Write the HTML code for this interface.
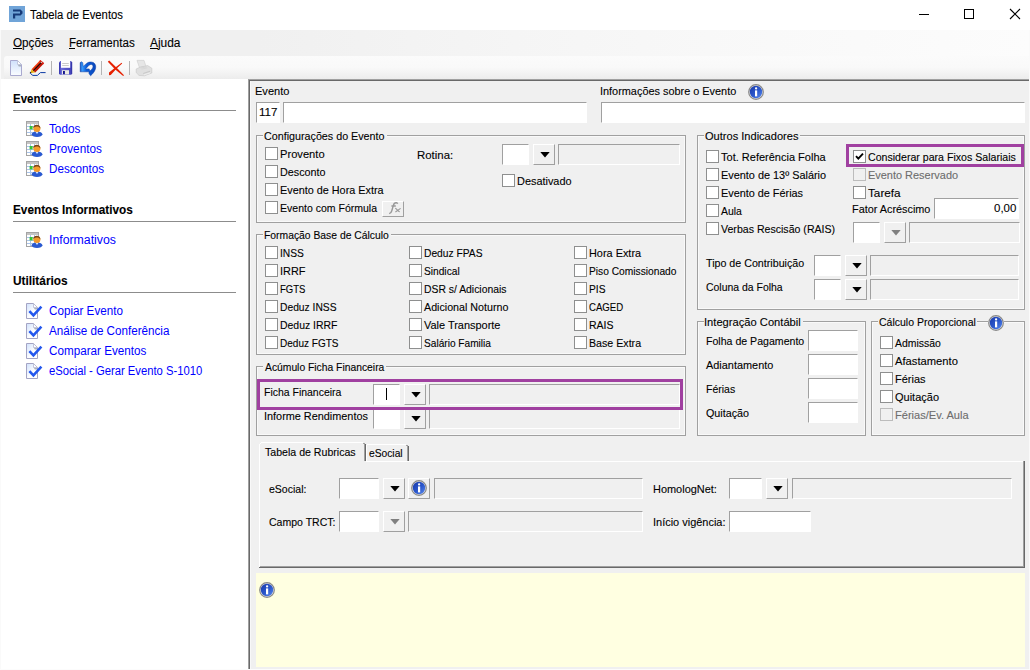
<!DOCTYPE html>
<html><head><meta charset="utf-8"><title>Tabela de Eventos</title>
<style>
html,body{margin:0;padding:0;}
body{width:1030px;height:670px;position:relative;overflow:hidden;background:#f0f0f0;font-family:"Liberation Sans", sans-serif;font-size:11px;}
body div, body span, body svg{position:absolute;display:block;box-sizing:border-box;white-space:nowrap;}
body span{-webkit-text-stroke:0.1px currentColor;}body span.ns{-webkit-text-stroke:0;}
</style></head><body>
<div style="left:0px;top:0px;width:1030px;height:30px;background:#fff;"></div>
<svg style="left:9px;top:6px" width="16" height="16" viewBox="0 0 16 16"><rect width="16" height="16" fill="#70a4d8"/><path d="M4 3.5H11.5L13.5 5.5V7.5L11.5 9.5H6.2V12.5H4V7.4H11V5.6H4Z" fill="#163a78"/></svg>
<span style="left:29.94px;top:7.34px;font-size:12px;font-weight:normal;color:#000;transform:scaleX(0.9415);transform-origin:0 0;line-height:16px;">Tabela de Eventos</span>
<svg style="left:915px;top:5px" width="110" height="20" viewBox="0 0 110 20"><path d="M4 9.5H14" stroke="#000" stroke-width="1"/><rect x="49.5" y="4.5" width="9" height="9" fill="none" stroke="#000" stroke-width="1"/><path d="M95 4L105 14M105 4L95 14" stroke="#000" stroke-width="1.1"/></svg>
<div style="left:0px;top:30px;width:1030px;height:26px;background:linear-gradient(90deg,#f0f0f0 0,#f0f0f0 25%,#f5f5f5 50%,#f9f9f9 75%,#fcfcfc 100%);"></div>
<span style="left:13.15px;top:35.34px;font-size:12px;font-weight:normal;color:#000;transform:scaleX(0.9741);transform-origin:0 0;line-height:16px;">Opções</span>
<span style="left:68.73px;top:35.34px;font-size:12px;font-weight:normal;color:#000;transform:scaleX(0.9656);transform-origin:0 0;line-height:16px;">Ferramentas</span>
<span style="left:149.97px;top:35.34px;font-size:12px;font-weight:normal;color:#000;transform:scaleX(0.9939);transform-origin:0 0;line-height:16px;">Ajuda</span>
<div style="left:13px;top:48px;width:9px;height:1px;background:#000;"></div>
<div style="left:69px;top:48px;width:6px;height:1px;background:#000;"></div>
<div style="left:150px;top:48px;width:8px;height:1px;background:#000;"></div>
<div style="left:0px;top:56px;width:4px;height:23px;background:#f0f0f0;"></div>
<div style="left:4px;top:56px;width:1026px;height:23px;background:linear-gradient(#fbfbfb,#f9f9f9 50%,#ececec);border-top-left-radius:3px;"></div>
<div style="left:51px;top:61px;width:1px;height:14px;background:#b4b4b4;"></div>
<div style="left:101px;top:61px;width:1px;height:14px;background:#b4b4b4;"></div>
<div style="left:129px;top:61px;width:1px;height:14px;background:#b4b4b4;"></div>
<svg style="left:9px;top:59px" width="14" height="18" viewBox="0 0 14 18"><defs><linearGradient id="nd" x1="0" y1="0" x2="0" y2="1"><stop offset="0" stop-color="#cfe0fb"/><stop offset="1" stop-color="#fbfdff"/></linearGradient></defs><path d="M1.5 1.5H8.5L12.5 5.5V16.5H1.5Z" fill="url(#nd)" stroke="#a9a9cf" stroke-width="1"/><path d="M8.5 1.5V5.5H12.5Z" fill="#fff" stroke="#b8bcd6" stroke-width="0.8"/><path d="M9 6H12V7.5H9.8Z" fill="#a8b0bc"/></svg>
<svg style="left:26px;top:58px" width="24" height="20" viewBox="0 0 24 20"><path d="M5.6 11.3L14.3 2.1L16.3 3.7L7.4 12.9Z" fill="#f0380c"/><path d="M7.4 12.9L16.3 3.7L18.1 5.3L9.3 14.4Z" fill="#c01404"/><path d="M7.3 12.7L15.6 4.1" stroke="#100404" stroke-width="1.1"/><path d="M14.3 2.1L18.1 5.3L17 6.4L13.3 3.2Z" fill="#d8281c"/><circle cx="15.4" cy="4.4" r="0.7" fill="#c8c8c8"/><path d="M5.4 11.2L9.2 14.5L4.6 15Z" fill="#e8b010"/><path d="M4 13.6L5.6 15L3.8 15.6Z" fill="#101020"/><path d="M4.4 15.4L6.8 17.4H11.4L14.4 14.6H19.6" stroke="#0a3aa4" stroke-width="1" fill="none"/></svg>
<svg style="left:54px;top:58px" width="24" height="20" viewBox="0 0 24 20"><defs><linearGradient id="sv" x1="0" y1="0" x2="1" y2="0"><stop offset="0" stop-color="#3030a8"/><stop offset="0.18" stop-color="#6c6cdc"/><stop offset="0.5" stop-color="#5656c8"/><stop offset="0.85" stop-color="#4a4ac0"/><stop offset="1" stop-color="#2c2ca0"/></linearGradient></defs><path d="M5 4.4L6.4 3H17L18.2 4.4V15.8L17.2 16.8H6L5 15.8Z" fill="url(#sv)"/><rect x="7" y="2.4" width="9.2" height="7.4" fill="#fdfdfd"/><path d="M8.2 5.5H14.8M8.2 7.5H14.8" stroke="#c4c4c4" stroke-width="0.9"/><rect x="8" y="12.2" width="7" height="4.2" fill="#ecece2"/><rect x="9" y="13" width="1.9" height="3.2" fill="#14148c"/></svg>
<svg style="left:76px;top:58px" width="24" height="20" viewBox="0 0 24 20"><defs><linearGradient id="ud" x1="0" y1="0" x2="1" y2="0"><stop offset="0" stop-color="#0a44b8"/><stop offset="0.12" stop-color="#3aa0ff"/><stop offset="0.4" stop-color="#0c5cd8"/><stop offset="1" stop-color="#0a48bc"/></linearGradient></defs><path d="M4.2 4.6L5.6 3.8L6.8 4.8L7.2 8.4L10.6 5.4C12.6 3.8 15.4 3.6 17.4 4.6C19.6 5.8 20.2 8.4 19.4 11C18.6 13.6 16.6 16 14.6 17.8L13 15.6V13.8H4.2ZM9.6 10.9H13.2L13.8 13C15.8 11.6 17.2 9.8 17 8C16.8 6.4 14.6 6 13 7.2Z" fill="url(#ud)" fill-rule="evenodd" stroke="#0838a0" stroke-width="0.5" stroke-linejoin="round"/></svg>
<svg style="left:104px;top:58px" width="24" height="20" viewBox="0 0 24 20"><path d="M3.8 3.8L5.2 2.6L12.4 9.6L20 17.2L19.2 18L11.2 11.4Z" fill="#e62000"/><path d="M17.6 4.8L18.2 5.6L12.4 10.8L6.8 17L5 17.2V14.4L11 9.8Z" fill="#e62000"/></svg>
<svg style="left:132px;top:58px" width="24" height="20" viewBox="0 0 24 20"><path d="M5 2.4H12L14 8.6L7.4 9.4Z" fill="#e6e6e6" stroke="#d0d0d0" stroke-width="0.7"/><path d="M4.2 11L8 9.2L15.6 7.6L19.8 10.2V15L12.4 17.8L7 17.4L4.2 14.6Z" fill="#e0e0e0" stroke="#cacaca" stroke-width="0.7"/><path d="M8.4 10.2L14.6 8.8M9.4 11.2L15.4 9.8" stroke="#d2d2d2" stroke-width="0.7"/><path d="M11.2 15.4L18 13.2" stroke="#c8c8c8" stroke-width="1.1"/><path d="M12 16.8L18.4 14.8" stroke="#eeeeee" stroke-width="1"/></svg>
<div style="left:0px;top:79px;width:248px;height:591px;background:#fff;"></div>
<span style="left:12.82px;top:90.84px;font-size:12px;font-weight:bold;color:#000;transform:scaleX(0.9565);transform-origin:0 0;line-height:16px;">Eventos</span>
<div style="left:13px;top:110px;width:223px;height:1px;background:#8c8c8c;"></div>
<svg style="left:26px;top:121px" width="17" height="16" viewBox="0 0 17 16">
<rect x="0.5" y="0.5" width="12" height="14" fill="#fff" stroke="#a4a4a4" stroke-width="1"/>
<rect x="1" y="1" width="11" height="2" fill="#c4c4c4"/>
<path d="M1 5.5H12M1 8.5H12M1 11.5H12M4.5 3V14M8.5 3V14" stroke="#a8c4ec" stroke-width="1"/>
<rect x="3.6" y="5" width="3" height="3.4" fill="#34c434"/>
<ellipse cx="11" cy="13.2" rx="5.4" ry="2.8" fill="#2a5ad0"/>
<path d="M9.6 11L11 13L12.4 11Z" fill="#dfe8fa"/>
<circle cx="10.9" cy="7.6" r="3.5" fill="#f29a2c"/>
<path d="M7.3 7.4C7.2 4.4 9.4 3.6 11.2 3.8C13.4 4 14.6 5.6 14.4 7.6C13.6 6 12 5.4 10.4 5.6C9 5.8 8 6.4 7.3 7.4Z" fill="#7a4418"/>
</svg>
<span class="ns" style="left:48.93px;top:121.34px;font-size:12px;font-weight:normal;color:#0000ff;transform:scaleX(0.9772);transform-origin:0 0;line-height:16px;">Todos</span>
<svg style="left:26px;top:141px" width="17" height="16" viewBox="0 0 17 16">
<rect x="0.5" y="0.5" width="12" height="14" fill="#fff" stroke="#a4a4a4" stroke-width="1"/>
<rect x="1" y="1" width="11" height="2" fill="#c4c4c4"/>
<path d="M1 5.5H12M1 8.5H12M1 11.5H12M4.5 3V14M8.5 3V14" stroke="#a8c4ec" stroke-width="1"/>
<rect x="3.6" y="5" width="3" height="3.4" fill="#34c434"/>
<ellipse cx="11" cy="13.2" rx="5.4" ry="2.8" fill="#2a5ad0"/>
<path d="M9.6 11L11 13L12.4 11Z" fill="#dfe8fa"/>
<circle cx="10.9" cy="7.6" r="3.5" fill="#f29a2c"/>
<path d="M7.3 7.4C7.2 4.4 9.4 3.6 11.2 3.8C13.4 4 14.6 5.6 14.4 7.6C13.6 6 12 5.4 10.4 5.6C9 5.8 8 6.4 7.3 7.4Z" fill="#7a4418"/>
</svg>
<span class="ns" style="left:49.02px;top:141.34px;font-size:12px;font-weight:normal;color:#0000ff;transform:scaleX(0.9773);transform-origin:0 0;line-height:16px;">Proventos</span>
<svg style="left:26px;top:161px" width="17" height="16" viewBox="0 0 17 16">
<rect x="0.5" y="0.5" width="12" height="14" fill="#fff" stroke="#a4a4a4" stroke-width="1"/>
<rect x="1" y="1" width="11" height="2" fill="#c4c4c4"/>
<path d="M1 5.5H12M1 8.5H12M1 11.5H12M4.5 3V14M8.5 3V14" stroke="#a8c4ec" stroke-width="1"/>
<rect x="3.6" y="5" width="3" height="3.4" fill="#34c434"/>
<ellipse cx="11" cy="13.2" rx="5.4" ry="2.8" fill="#2a5ad0"/>
<path d="M9.6 11L11 13L12.4 11Z" fill="#dfe8fa"/>
<circle cx="10.9" cy="7.6" r="3.5" fill="#f29a2c"/>
<path d="M7.3 7.4C7.2 4.4 9.4 3.6 11.2 3.8C13.4 4 14.6 5.6 14.4 7.6C13.6 6 12 5.4 10.4 5.6C9 5.8 8 6.4 7.3 7.4Z" fill="#7a4418"/>
</svg>
<span class="ns" style="left:49.03px;top:161.34px;font-size:12px;font-weight:normal;color:#0000ff;transform:scaleX(0.9701);transform-origin:0 0;line-height:16px;">Descontos</span>
<span style="left:12.80px;top:201.84px;font-size:12px;font-weight:bold;color:#000;transform:scaleX(0.9808);transform-origin:0 0;line-height:16px;">Eventos Informativos</span>
<div style="left:13px;top:221px;width:223px;height:1px;background:#8c8c8c;"></div>
<svg style="left:26px;top:232px" width="17" height="16" viewBox="0 0 17 16">
<rect x="0.5" y="0.5" width="12" height="14" fill="#fff" stroke="#a4a4a4" stroke-width="1"/>
<rect x="1" y="1" width="11" height="2" fill="#c4c4c4"/>
<path d="M1 5.5H12M1 8.5H12M1 11.5H12M4.5 3V14M8.5 3V14" stroke="#a8c4ec" stroke-width="1"/>
<rect x="3.6" y="5" width="3" height="3.4" fill="#34c434"/>
<ellipse cx="11" cy="13.2" rx="5.4" ry="2.8" fill="#2a5ad0"/>
<path d="M9.6 11L11 13L12.4 11Z" fill="#dfe8fa"/>
<circle cx="10.9" cy="7.6" r="3.5" fill="#f29a2c"/>
<path d="M7.3 7.4C7.2 4.4 9.4 3.6 11.2 3.8C13.4 4 14.6 5.6 14.4 7.6C13.6 6 12 5.4 10.4 5.6C9 5.8 8 6.4 7.3 7.4Z" fill="#7a4418"/>
</svg>
<span class="ns" style="left:48.88px;top:232.34px;font-size:12px;font-weight:normal;color:#0000ff;transform:scaleX(1.0249);transform-origin:0 0;line-height:16px;">Informativos</span>
<span style="left:12.89px;top:272.84px;font-size:12px;font-weight:bold;color:#000;transform:scaleX(0.9866);transform-origin:0 0;line-height:16px;">Utilitários</span>
<div style="left:13px;top:292px;width:223px;height:1px;background:#8c8c8c;"></div>
<svg style="left:26px;top:303px" width="17" height="16" viewBox="0 0 17 16">
<defs><linearGradient id="cg303" x1="0" y1="0" x2="1" y2="1"><stop offset="0" stop-color="#cfe0fb"/><stop offset="0.6" stop-color="#fff"/></linearGradient></defs>
<path d="M0.5 0.5H7.5L11.5 4.5V15.5H0.5Z" fill="url(#cg303)" stroke="#a4a4c4" stroke-width="1"/>
<path d="M7.5 0.5V4.5H11.5Z" fill="#fff" stroke="#b4b8d0" stroke-width="0.8"/>
<path d="M8 5H11V6.4H8.8Z" fill="#a8b0bc"/>
<path d="M3.4 8.2L7.4 12.4L15.4 3.6" stroke="#2458ee" stroke-width="2.6" fill="none"/>
</svg>
<span class="ns" style="left:49.09px;top:303.34px;font-size:12px;font-weight:normal;color:#0000ff;transform:scaleX(0.9719);transform-origin:0 0;line-height:16px;">Copiar Evento</span>
<svg style="left:26px;top:323px" width="17" height="16" viewBox="0 0 17 16">
<defs><linearGradient id="cg323" x1="0" y1="0" x2="1" y2="1"><stop offset="0" stop-color="#cfe0fb"/><stop offset="0.6" stop-color="#fff"/></linearGradient></defs>
<path d="M0.5 0.5H7.5L11.5 4.5V15.5H0.5Z" fill="url(#cg323)" stroke="#a4a4c4" stroke-width="1"/>
<path d="M7.5 0.5V4.5H11.5Z" fill="#fff" stroke="#b4b8d0" stroke-width="0.8"/>
<path d="M8 5H11V6.4H8.8Z" fill="#a8b0bc"/>
<path d="M3.4 8.2L7.4 12.4L15.4 3.6" stroke="#2458ee" stroke-width="2.6" fill="none"/>
</svg>
<span class="ns" style="left:49.07px;top:323.34px;font-size:12px;font-weight:normal;color:#0000ff;transform:scaleX(0.9705);transform-origin:0 0;line-height:16px;">Análise de Conferência</span>
<svg style="left:26px;top:343px" width="17" height="16" viewBox="0 0 17 16">
<defs><linearGradient id="cg343" x1="0" y1="0" x2="1" y2="1"><stop offset="0" stop-color="#cfe0fb"/><stop offset="0.6" stop-color="#fff"/></linearGradient></defs>
<path d="M0.5 0.5H7.5L11.5 4.5V15.5H0.5Z" fill="url(#cg343)" stroke="#a4a4c4" stroke-width="1"/>
<path d="M7.5 0.5V4.5H11.5Z" fill="#fff" stroke="#b4b8d0" stroke-width="0.8"/>
<path d="M8 5H11V6.4H8.8Z" fill="#a8b0bc"/>
<path d="M3.4 8.2L7.4 12.4L15.4 3.6" stroke="#2458ee" stroke-width="2.6" fill="none"/>
</svg>
<span class="ns" style="left:49.09px;top:343.34px;font-size:12px;font-weight:normal;color:#0000ff;transform:scaleX(0.9730);transform-origin:0 0;line-height:16px;">Comparar Eventos</span>
<svg style="left:26px;top:363px" width="17" height="16" viewBox="0 0 17 16">
<defs><linearGradient id="cg363" x1="0" y1="0" x2="1" y2="1"><stop offset="0" stop-color="#cfe0fb"/><stop offset="0.6" stop-color="#fff"/></linearGradient></defs>
<path d="M0.5 0.5H7.5L11.5 4.5V15.5H0.5Z" fill="url(#cg363)" stroke="#a4a4c4" stroke-width="1"/>
<path d="M7.5 0.5V4.5H11.5Z" fill="#fff" stroke="#b4b8d0" stroke-width="0.8"/>
<path d="M8 5H11V6.4H8.8Z" fill="#a8b0bc"/>
<path d="M3.4 8.2L7.4 12.4L15.4 3.6" stroke="#2458ee" stroke-width="2.6" fill="none"/>
</svg>
<span class="ns" style="left:49.13px;top:363.34px;font-size:12px;font-weight:normal;color:#0000ff;transform:scaleX(0.9380);transform-origin:0 0;line-height:16px;">eSocial - Gerar Evento S-1010</span>
<div style="left:248px;top:79px;width:782px;height:591px;background:#f0f0f0;"></div>
<div style="left:248px;top:79px;width:782px;height:1px;background:#a0a0a0;"></div>
<div style="left:248px;top:79px;width:1px;height:591px;background:#a0a0a0;"></div>
<div style="left:249px;top:80px;width:781px;height:1px;background:#696969;"></div>
<div style="left:249px;top:80px;width:1px;height:590px;background:#696969;"></div>
<div style="left:250px;top:81px;width:1px;height:588px;background:#f8f8f8;"></div>
<div style="left:1029px;top:30px;width:1px;height:640px;background:#fafafa;"></div>
<div style="left:0px;top:30px;width:1px;height:640px;background:#fafafa;"></div>
<div style="left:0px;top:669px;width:1030px;height:1px;background:#fcfcfc;"></div>
<span style="left:255.09px;top:83.19px;font-size:11px;font-weight:normal;color:#000;transform:scaleX(1.0038);transform-origin:0 0;line-height:16px;">Evento</span>
<div style="left:256px;top:102px;width:23px;height:20px;background:#fff;border-top:1px solid #a0a0a0;border-left:1px solid #a0a0a0;border-right:1px solid #fff;border-bottom:1px solid #fff;box-sizing:content-box;width:22px;height:19px;"></div>
<span style="left:259.11px;top:104.19px;font-size:11px;font-weight:normal;color:#000;transform:scaleX(1.0543);transform-origin:0 0;line-height:16px;">117</span>
<div style="left:283px;top:102px;width:303px;height:20px;background:#fff;border-top:1px solid #a0a0a0;border-left:1px solid #a0a0a0;border-right:1px solid #fff;border-bottom:1px solid #fff;box-sizing:content-box;width:302px;height:19px;"></div>
<span style="left:600.21px;top:83.19px;font-size:11px;font-weight:normal;color:#000;transform:scaleX(0.9903);transform-origin:0 0;line-height:16px;">Informações sobre o Evento</span>
<svg style="left:748px;top:84px" width="16" height="16" viewBox="0 0 16 16">
<defs><linearGradient id="ig748_84" x1="0" y1="0" x2="1" y2="1"><stop offset="0" stop-color="#1a3aaa"/><stop offset="0.55" stop-color="#2c58cc"/><stop offset="1" stop-color="#5c8cee"/></linearGradient></defs>
<circle cx="8" cy="8" r="7.3" fill="#e4e4e4" stroke="#888888" stroke-width="1.2"/>
<circle cx="8" cy="8" r="6.2" fill="url(#ig748_84)"/>
<rect x="7" y="3.2" width="2.2" height="2.2" rx="1" fill="#fff"/>
<rect x="7" y="6.4" width="2.2" height="6" fill="#fff"/>
</svg>
<div style="left:601px;top:102px;width:423px;height:20px;background:#fff;border-top:1px solid #a0a0a0;border-left:1px solid #a0a0a0;border-right:1px solid #fff;border-bottom:1px solid #fff;box-sizing:content-box;width:422px;height:19px;"></div>
<div style="left:257px;top:136px;width:1px;height:86px;background:#f9f9f9;"></div>
<div style="left:684px;top:136px;width:1px;height:86px;background:#f9f9f9;"></div>
<div style="left:257px;top:221px;width:428px;height:1px;background:#f9f9f9;"></div>
<div style="left:257px;top:136px;width:6px;height:1px;background:#f9f9f9;"></div>
<div style="left:386.5px;top:136px;width:298.5px;height:1px;background:#f9f9f9;"></div>
<div style="left:256px;top:135px;width:1px;height:88px;background:#a0a0a0;"></div>
<div style="left:685px;top:135px;width:1px;height:88px;background:#a0a0a0;"></div>
<div style="left:256px;top:222px;width:430px;height:1px;background:#a0a0a0;"></div>
<div style="left:256px;top:135px;width:7px;height:1px;background:#a0a0a0;"></div>
<div style="left:386.5px;top:135px;width:299.5px;height:1px;background:#a0a0a0;"></div>
<span style="left:264.45px;top:128.19px;font-size:11px;font-weight:normal;color:#000;transform:scaleX(0.9755);transform-origin:0 0;line-height:16px;">Configurações do Evento</span>
<div style="left:265px;top:147px;width:11px;height:11px;background:#fff;border:1px solid #8e8f8f;box-sizing:content-box;"></div>
<span style="left:279.88px;top:146.19px;font-size:11px;font-weight:normal;color:#000;transform:scaleX(1.0127);transform-origin:0 0;line-height:16px;">Provento</span>
<div style="left:265px;top:165px;width:11px;height:11px;background:#fff;border:1px solid #8e8f8f;box-sizing:content-box;"></div>
<span style="left:279.91px;top:164.19px;font-size:11px;font-weight:normal;color:#000;transform:scaleX(0.9802);transform-origin:0 0;line-height:16px;">Desconto</span>
<div style="left:265px;top:183px;width:11px;height:11px;background:#fff;border:1px solid #8e8f8f;box-sizing:content-box;"></div>
<span style="left:279.91px;top:182.19px;font-size:11px;font-weight:normal;color:#000;transform:scaleX(0.9848);transform-origin:0 0;line-height:16px;">Evento de Hora Extra</span>
<div style="left:265px;top:201px;width:11px;height:11px;background:#fff;border:1px solid #8e8f8f;box-sizing:content-box;"></div>
<span style="left:279.93px;top:200.19px;font-size:11px;font-weight:normal;color:#000;transform:scaleX(0.9563);transform-origin:0 0;line-height:16px;">Evento com Fórmula</span>
<div style="left:382px;top:201px;width:20px;height:14px;background:#f0f0f0;border-top:1px solid #fff;border-left:1px solid #fff;border-right:1px solid #a0a0a0;border-bottom:1px solid #a0a0a0;box-sizing:content-box;"></div>
<svg style="left:382px;top:201px" width="22" height="16" viewBox="0 0 22 16"><path d="M7.2 12.7C8.6 12.3 9.3 11.4 9.7 10L11.3 4.6C11.9 2.6 13 1.6 14.4 1.8C15 1.9 15.5 2.3 15.7 2.8M9.4 5H13.8" stroke="#989898" stroke-width="1.4" fill="none"/><path d="M13.2 7.4C14.8 7.2 15.8 11 17.8 10.8M18.6 7.4L13.4 11" stroke="#989898" stroke-width="1.1" fill="none"/></svg>
<span style="left:416.86px;top:147.19px;font-size:11px;font-weight:normal;color:#000;transform:scaleX(1.0373);transform-origin:0 0;line-height:16px;">Rotina:</span>
<div style="left:502px;top:144px;width:26px;height:20px;background:#fff;border-top:1px solid #a0a0a0;border-left:1px solid #a0a0a0;border-right:1px solid #fff;border-bottom:1px solid #fff;box-sizing:content-box;width:25px;height:19px;"></div>
<div style="left:533px;top:144px;width:20px;height:19px;background:#f0f0f0;border-top:1px solid #fff;border-left:1px solid #fff;border-right:1px solid #a0a0a0;border-bottom:1px solid #a0a0a0;box-sizing:content-box;"></div>
<svg style="left:539.5px;top:152px" width="10" height="6" viewBox="0 0 10 6"><path d="M0.3 0H9.7L5 5.5Z" fill="#000"/></svg>
<div style="left:558px;top:144px;width:121px;height:20px;background:#f0f0f0;border-top:1px solid #a0a0a0;border-left:1px solid #a0a0a0;border-right:1px solid #fff;border-bottom:1px solid #fff;box-sizing:content-box;width:120px;height:19px;"></div>
<div style="left:502px;top:174px;width:11px;height:11px;background:#fff;border:1px solid #8e8f8f;box-sizing:content-box;"></div>
<span style="left:516.90px;top:173.19px;font-size:11px;font-weight:normal;color:#000;transform:scaleX(0.9915);transform-origin:0 0;line-height:16px;">Desativado</span>
<div style="left:257px;top:235px;width:1px;height:119px;background:#f9f9f9;"></div>
<div style="left:684px;top:235px;width:1px;height:119px;background:#f9f9f9;"></div>
<div style="left:257px;top:353px;width:428px;height:1px;background:#f9f9f9;"></div>
<div style="left:257px;top:235px;width:6px;height:1px;background:#f9f9f9;"></div>
<div style="left:390.5px;top:235px;width:294.5px;height:1px;background:#f9f9f9;"></div>
<div style="left:256px;top:234px;width:1px;height:121px;background:#a0a0a0;"></div>
<div style="left:685px;top:234px;width:1px;height:121px;background:#a0a0a0;"></div>
<div style="left:256px;top:354px;width:430px;height:1px;background:#a0a0a0;"></div>
<div style="left:256px;top:234px;width:7px;height:1px;background:#a0a0a0;"></div>
<div style="left:390.5px;top:234px;width:295.5px;height:1px;background:#a0a0a0;"></div>
<span style="left:264.15px;top:227.19px;font-size:11px;font-weight:normal;color:#000;transform:scaleX(0.9405);transform-origin:0 0;line-height:16px;">Formação Base de Cálculo</span>
<div style="left:265px;top:246px;width:11px;height:11px;background:#fff;border:1px solid #8e8f8f;box-sizing:content-box;"></div>
<span style="left:279.57px;top:245.19px;font-size:11px;font-weight:normal;color:#000;transform:scaleX(0.9302);transform-origin:0 0;line-height:16px;">INSS</span>
<div style="left:265px;top:264px;width:11px;height:11px;background:#fff;border:1px solid #8e8f8f;box-sizing:content-box;"></div>
<span style="left:279.51px;top:263.19px;font-size:11px;font-weight:normal;color:#000;transform:scaleX(0.9910);transform-origin:0 0;line-height:16px;">IRRF</span>
<div style="left:265px;top:282px;width:11px;height:11px;background:#fff;border:1px solid #8e8f8f;box-sizing:content-box;"></div>
<span style="left:280.01px;top:281.19px;font-size:11px;font-weight:normal;color:#000;transform:scaleX(0.8662);transform-origin:0 0;line-height:16px;">FGTS</span>
<div style="left:265px;top:300px;width:11px;height:11px;background:#fff;border:1px solid #8e8f8f;box-sizing:content-box;"></div>
<span style="left:279.95px;top:299.19px;font-size:11px;font-weight:normal;color:#000;transform:scaleX(0.9336);transform-origin:0 0;line-height:16px;">Deduz INSS</span>
<div style="left:265px;top:318px;width:11px;height:11px;background:#fff;border:1px solid #8e8f8f;box-sizing:content-box;"></div>
<span style="left:279.94px;top:317.19px;font-size:11px;font-weight:normal;color:#000;transform:scaleX(0.9495);transform-origin:0 0;line-height:16px;">Deduz IRRF</span>
<div style="left:265px;top:336px;width:11px;height:11px;background:#fff;border:1px solid #8e8f8f;box-sizing:content-box;"></div>
<span style="left:279.97px;top:335.19px;font-size:11px;font-weight:normal;color:#000;transform:scaleX(0.9111);transform-origin:0 0;line-height:16px;">Deduz FGTS</span>
<div style="left:409px;top:246px;width:11px;height:11px;background:#fff;border:1px solid #8e8f8f;box-sizing:content-box;"></div>
<span style="left:423.96px;top:245.19px;font-size:11px;font-weight:normal;color:#000;transform:scaleX(0.9320);transform-origin:0 0;line-height:16px;">Deduz FPAS</span>
<div style="left:409px;top:264px;width:11px;height:11px;background:#fff;border:1px solid #8e8f8f;box-sizing:content-box;"></div>
<span style="left:424.04px;top:263.19px;font-size:11px;font-weight:normal;color:#000;transform:scaleX(0.9254);transform-origin:0 0;line-height:16px;">Sindical</span>
<div style="left:409px;top:282px;width:11px;height:11px;background:#fff;border:1px solid #8e8f8f;box-sizing:content-box;"></div>
<span style="left:423.95px;top:281.19px;font-size:11px;font-weight:normal;color:#000;transform:scaleX(0.9428);transform-origin:0 0;line-height:16px;">DSR s/ Adicionais</span>
<div style="left:409px;top:300px;width:11px;height:11px;background:#fff;border:1px solid #8e8f8f;box-sizing:content-box;"></div>
<span style="left:424.07px;top:299.19px;font-size:11px;font-weight:normal;color:#000;transform:scaleX(0.9717);transform-origin:0 0;line-height:16px;">Adicional Noturno</span>
<div style="left:409px;top:318px;width:11px;height:11px;background:#fff;border:1px solid #8e8f8f;box-sizing:content-box;"></div>
<span style="left:424.04px;top:317.19px;font-size:11px;font-weight:normal;color:#000;transform:scaleX(0.9950);transform-origin:0 0;line-height:16px;">Vale Transporte</span>
<div style="left:409px;top:336px;width:11px;height:11px;background:#fff;border:1px solid #8e8f8f;box-sizing:content-box;"></div>
<span style="left:424.04px;top:335.19px;font-size:11px;font-weight:normal;color:#000;transform:scaleX(0.9204);transform-origin:0 0;line-height:16px;">Salário Familia</span>
<div style="left:574px;top:246px;width:11px;height:11px;background:#fff;border:1px solid #8e8f8f;box-sizing:content-box;"></div>
<span style="left:588.90px;top:245.19px;font-size:11px;font-weight:normal;color:#000;transform:scaleX(0.9906);transform-origin:0 0;line-height:16px;">Hora Extra</span>
<div style="left:574px;top:264px;width:11px;height:11px;background:#fff;border:1px solid #8e8f8f;box-sizing:content-box;"></div>
<span style="left:588.96px;top:263.19px;font-size:11px;font-weight:normal;color:#000;transform:scaleX(0.9291);transform-origin:0 0;line-height:16px;">Piso Comissionado</span>
<div style="left:574px;top:282px;width:11px;height:11px;background:#fff;border:1px solid #8e8f8f;box-sizing:content-box;"></div>
<span style="left:588.96px;top:281.19px;font-size:11px;font-weight:normal;color:#000;transform:scaleX(0.9300);transform-origin:0 0;line-height:16px;">PIS</span>
<div style="left:574px;top:300px;width:11px;height:11px;background:#fff;border:1px solid #8e8f8f;box-sizing:content-box;"></div>
<span style="left:589.01px;top:299.19px;font-size:11px;font-weight:normal;color:#000;transform:scaleX(0.8730);transform-origin:0 0;line-height:16px;">CAGED</span>
<div style="left:574px;top:318px;width:11px;height:11px;background:#fff;border:1px solid #8e8f8f;box-sizing:content-box;"></div>
<span style="left:588.93px;top:317.19px;font-size:11px;font-weight:normal;color:#000;transform:scaleX(0.9555);transform-origin:0 0;line-height:16px;">RAIS</span>
<div style="left:574px;top:336px;width:11px;height:11px;background:#fff;border:1px solid #8e8f8f;box-sizing:content-box;"></div>
<span style="left:588.92px;top:335.19px;font-size:11px;font-weight:normal;color:#000;transform:scaleX(0.9677);transform-origin:0 0;line-height:16px;">Base Extra</span>
<div style="left:257px;top:367px;width:1px;height:68px;background:#f9f9f9;"></div>
<div style="left:684px;top:367px;width:1px;height:68px;background:#f9f9f9;"></div>
<div style="left:257px;top:434px;width:428px;height:1px;background:#f9f9f9;"></div>
<div style="left:257px;top:367px;width:6px;height:1px;background:#f9f9f9;"></div>
<div style="left:386.3px;top:367px;width:298.7px;height:1px;background:#f9f9f9;"></div>
<div style="left:256px;top:366px;width:1px;height:70px;background:#a0a0a0;"></div>
<div style="left:685px;top:366px;width:1px;height:70px;background:#a0a0a0;"></div>
<div style="left:256px;top:435px;width:430px;height:1px;background:#a0a0a0;"></div>
<div style="left:256px;top:366px;width:7px;height:1px;background:#a0a0a0;"></div>
<div style="left:386.3px;top:366px;width:299.7px;height:1px;background:#a0a0a0;"></div>
<span style="left:264.97px;top:359.19px;font-size:11px;font-weight:normal;color:#000;transform:scaleX(0.9382);transform-origin:0 0;line-height:16px;">Acúmulo Ficha Financeira</span>
<span style="left:263.64px;top:384.19px;font-size:11px;font-weight:normal;color:#000;transform:scaleX(0.9514);transform-origin:0 0;line-height:16px;">Ficha Financeira</span>
<div style="left:373px;top:384px;width:26px;height:20px;background:#fff;border-top:1px solid #a0a0a0;border-left:1px solid #a0a0a0;border-right:1px solid #fff;border-bottom:1px solid #fff;box-sizing:content-box;width:25px;height:19px;"></div>
<div style="left:386px;top:388px;width:1px;height:12px;background:#000;"></div>
<div style="left:404px;top:384px;width:20px;height:19px;background:#f0f0f0;border-top:1px solid #fff;border-left:1px solid #fff;border-right:1px solid #a0a0a0;border-bottom:1px solid #a0a0a0;box-sizing:content-box;"></div>
<svg style="left:410.5px;top:392px" width="10" height="6" viewBox="0 0 10 6"><path d="M0.3 0H9.7L5 5.5Z" fill="#000"/></svg>
<div style="left:429px;top:384px;width:250px;height:20px;background:#f0f0f0;border-top:1px solid #a0a0a0;border-left:1px solid #a0a0a0;border-right:1px solid #fff;border-bottom:1px solid #fff;box-sizing:content-box;width:249px;height:19px;"></div>
<span style="left:263.51px;top:408.19px;font-size:11px;font-weight:normal;color:#000;transform:scaleX(0.9880);transform-origin:0 0;line-height:16px;">Informe Rendimentos</span>
<div style="left:373px;top:408px;width:26px;height:20px;background:#fff;border-top:1px solid #a0a0a0;border-left:1px solid #a0a0a0;border-right:1px solid #fff;border-bottom:1px solid #fff;box-sizing:content-box;width:25px;height:19px;"></div>
<div style="left:404px;top:408px;width:20px;height:19px;background:#f0f0f0;border-top:1px solid #fff;border-left:1px solid #fff;border-right:1px solid #a0a0a0;border-bottom:1px solid #a0a0a0;box-sizing:content-box;"></div>
<svg style="left:410.5px;top:416px" width="10" height="6" viewBox="0 0 10 6"><path d="M0.3 0H9.7L5 5.5Z" fill="#000"/></svg>
<div style="left:429px;top:408px;width:250px;height:20px;background:#f0f0f0;border-top:1px solid #a0a0a0;border-left:1px solid #a0a0a0;border-right:1px solid #fff;border-bottom:1px solid #fff;box-sizing:content-box;width:249px;height:19px;"></div>
<div style="left:257px;top:379px;width:426px;height:31px;border:3px solid #a040a0;"></div>
<div style="left:698px;top:136px;width:1px;height:173px;background:#f9f9f9;"></div>
<div style="left:1023px;top:136px;width:1px;height:173px;background:#f9f9f9;"></div>
<div style="left:698px;top:308px;width:326px;height:1px;background:#f9f9f9;"></div>
<div style="left:698px;top:136px;width:5.5px;height:1px;background:#f9f9f9;"></div>
<div style="left:800px;top:136px;width:224px;height:1px;background:#f9f9f9;"></div>
<div style="left:697px;top:135px;width:1px;height:175px;background:#a0a0a0;"></div>
<div style="left:1024px;top:135px;width:1px;height:175px;background:#a0a0a0;"></div>
<div style="left:697px;top:309px;width:328px;height:1px;background:#a0a0a0;"></div>
<div style="left:697px;top:135px;width:6.5px;height:1px;background:#a0a0a0;"></div>
<div style="left:800px;top:135px;width:225px;height:1px;background:#a0a0a0;"></div>
<span style="left:704.97px;top:128.19px;font-size:11px;font-weight:normal;color:#000;transform:scaleX(1.0054);transform-origin:0 0;line-height:16px;">Outros Indicadores</span>
<div style="left:706px;top:150px;width:11px;height:11px;background:#fff;border:1px solid #8e8f8f;box-sizing:content-box;"></div>
<span style="left:720.85px;top:149.19px;font-size:11px;font-weight:normal;color:#000;transform:scaleX(1.0008);transform-origin:0 0;line-height:16px;">Tot. Referência Folha</span>
<div style="left:706px;top:168px;width:11px;height:11px;background:#fff;border:1px solid #8e8f8f;box-sizing:content-box;"></div>
<span style="left:720.90px;top:167.19px;font-size:11px;font-weight:normal;color:#000;transform:scaleX(0.9897);transform-origin:0 0;line-height:16px;">Evento de 13º Salário</span>
<div style="left:706px;top:186px;width:11px;height:11px;background:#fff;border:1px solid #8e8f8f;box-sizing:content-box;"></div>
<span style="left:720.91px;top:185.19px;font-size:11px;font-weight:normal;color:#000;transform:scaleX(0.9860);transform-origin:0 0;line-height:16px;">Evento de Férias</span>
<div style="left:706px;top:204px;width:11px;height:11px;background:#fff;border:1px solid #8e8f8f;box-sizing:content-box;"></div>
<span style="left:721.07px;top:203.19px;font-size:11px;font-weight:normal;color:#000;transform:scaleX(0.9500);transform-origin:0 0;line-height:16px;">Aula</span>
<div style="left:706px;top:222px;width:11px;height:11px;background:#fff;border:1px solid #8e8f8f;box-sizing:content-box;"></div>
<span style="left:721.04px;top:221.19px;font-size:11px;font-weight:normal;color:#000;transform:scaleX(0.9623);transform-origin:0 0;line-height:16px;">Verbas Rescisão (RAIS)</span>
<div style="left:853px;top:150px;width:11px;height:11px;background:#fff;border:1px solid #8e8f8f;box-sizing:content-box;"><svg width="11" height="11" viewBox="0 0 11 11" style="left:0;top:0"><path d="M2 5.2L4.3 7.6L9 2.6" stroke="#000" stroke-width="1.9" fill="none"/></svg></div>
<span style="left:868.16px;top:149.19px;font-size:11px;font-weight:normal;color:#000;transform:scaleX(0.9635);transform-origin:0 0;line-height:16px;">Considerar para Fixos Salariais</span>
<div style="left:853px;top:168px;width:11px;height:11px;background:#f0f0f0;border:1px solid #bcbcbc;box-sizing:content-box;"></div>
<span style="left:867.90px;top:167.19px;font-size:11px;font-weight:normal;color:#6d6d6d;transform:scaleX(0.9952);transform-origin:0 0;line-height:16px;">Evento Reservado</span>
<div style="left:853px;top:186px;width:11px;height:11px;background:#fff;border:1px solid #8e8f8f;box-sizing:content-box;"></div>
<span style="left:867.73px;top:185.19px;font-size:11px;font-weight:normal;color:#000;transform:scaleX(1.0678);transform-origin:0 0;line-height:16px;">Tarefa</span>
<div style="left:846px;top:144px;width:178px;height:23px;border:3px solid #a040a0;"></div>
<span style="left:851.61px;top:201.19px;font-size:11px;font-weight:normal;color:#000;transform:scaleX(0.9860);transform-origin:0 0;line-height:16px;">Fator Acréscimo</span>
<div style="left:934px;top:198px;width:84px;height:20px;background:#fff;border-top:1px solid #a0a0a0;border-left:1px solid #a0a0a0;border-right:1px solid #fff;border-bottom:1px solid #fff;box-sizing:content-box;width:83px;height:19px;"></div>
<span style="left:993.54px;top:200.19px;font-size:11px;font-weight:normal;color:#000;transform:scaleX(1.0423);transform-origin:0 0;line-height:16px;">0,00</span>
<div style="left:853px;top:222px;width:26px;height:20px;background:#fff;border-top:1px solid #a0a0a0;border-left:1px solid #a0a0a0;border-right:1px solid #fff;border-bottom:1px solid #fff;box-sizing:content-box;width:25px;height:19px;"></div>
<div style="left:884px;top:222px;width:20px;height:19px;background:#f0f0f0;border-top:1px solid #fff;border-left:1px solid #fff;border-right:1px solid #a0a0a0;border-bottom:1px solid #a0a0a0;box-sizing:content-box;"></div>
<svg style="left:890.5px;top:230px" width="10" height="6" viewBox="0 0 10 6"><path d="M0.3 0H9.7L5 5.5Z" fill="#808080"/></svg>
<div style="left:909px;top:222px;width:110px;height:20px;background:#f0f0f0;border-top:1px solid #a0a0a0;border-left:1px solid #a0a0a0;border-right:1px solid #fff;border-bottom:1px solid #fff;box-sizing:content-box;width:109px;height:19px;"></div>
<span style="left:705.76px;top:255.19px;font-size:11px;font-weight:normal;color:#000;transform:scaleX(0.9714);transform-origin:0 0;line-height:16px;">Tipo de Contribuição</span>
<div style="left:814px;top:255px;width:26px;height:20px;background:#fff;border-top:1px solid #a0a0a0;border-left:1px solid #a0a0a0;border-right:1px solid #fff;border-bottom:1px solid #fff;box-sizing:content-box;width:25px;height:19px;"></div>
<div style="left:845px;top:255px;width:20px;height:19px;background:#f0f0f0;border-top:1px solid #fff;border-left:1px solid #fff;border-right:1px solid #a0a0a0;border-bottom:1px solid #a0a0a0;box-sizing:content-box;"></div>
<svg style="left:851.5px;top:263px" width="10" height="6" viewBox="0 0 10 6"><path d="M0.3 0H9.7L5 5.5Z" fill="#000"/></svg>
<div style="left:870px;top:255px;width:148px;height:20px;background:#f0f0f0;border-top:1px solid #a0a0a0;border-left:1px solid #a0a0a0;border-right:1px solid #fff;border-bottom:1px solid #fff;box-sizing:content-box;width:147px;height:19px;"></div>
<span style="left:705.87px;top:279.19px;font-size:11px;font-weight:normal;color:#000;transform:scaleX(0.9494);transform-origin:0 0;line-height:16px;">Coluna da Folha</span>
<div style="left:814px;top:279px;width:26px;height:20px;background:#fff;border-top:1px solid #a0a0a0;border-left:1px solid #a0a0a0;border-right:1px solid #fff;border-bottom:1px solid #fff;box-sizing:content-box;width:25px;height:19px;"></div>
<div style="left:845px;top:279px;width:20px;height:19px;background:#f0f0f0;border-top:1px solid #fff;border-left:1px solid #fff;border-right:1px solid #a0a0a0;border-bottom:1px solid #a0a0a0;box-sizing:content-box;"></div>
<svg style="left:851.5px;top:287px" width="10" height="6" viewBox="0 0 10 6"><path d="M0.3 0H9.7L5 5.5Z" fill="#000"/></svg>
<div style="left:870px;top:279px;width:148px;height:20px;background:#f0f0f0;border-top:1px solid #a0a0a0;border-left:1px solid #a0a0a0;border-right:1px solid #fff;border-bottom:1px solid #fff;box-sizing:content-box;width:147px;height:19px;"></div>
<div style="left:698px;top:322px;width:1px;height:113px;background:#f9f9f9;"></div>
<div style="left:864px;top:322px;width:1px;height:113px;background:#f9f9f9;"></div>
<div style="left:698px;top:434px;width:167px;height:1px;background:#f9f9f9;"></div>
<div style="left:698px;top:322px;width:5.5px;height:1px;background:#f9f9f9;"></div>
<div style="left:802.5px;top:322px;width:62.5px;height:1px;background:#f9f9f9;"></div>
<div style="left:697px;top:321px;width:1px;height:115px;background:#a0a0a0;"></div>
<div style="left:865px;top:321px;width:1px;height:115px;background:#a0a0a0;"></div>
<div style="left:697px;top:435px;width:169px;height:1px;background:#a0a0a0;"></div>
<div style="left:697px;top:321px;width:6.5px;height:1px;background:#a0a0a0;"></div>
<div style="left:802.5px;top:321px;width:63.5px;height:1px;background:#a0a0a0;"></div>
<span style="left:704.49px;top:314.19px;font-size:11px;font-weight:normal;color:#000;transform:scaleX(1.0143);transform-origin:0 0;line-height:16px;">Integração Contábil</span>
<span style="left:705.73px;top:333.19px;font-size:11px;font-weight:normal;color:#000;transform:scaleX(0.9618);transform-origin:0 0;line-height:16px;">Folha de Pagamento</span>
<div style="left:808px;top:330px;width:49px;height:20px;background:#fff;border-top:1px solid #a0a0a0;border-left:1px solid #a0a0a0;border-right:1px solid #fff;border-bottom:1px solid #fff;box-sizing:content-box;width:48px;height:19px;"></div>
<span style="left:705.67px;top:357.19px;font-size:11px;font-weight:normal;color:#000;transform:scaleX(0.9915);transform-origin:0 0;line-height:16px;">Adiantamento</span>
<div style="left:808px;top:354px;width:49px;height:20px;background:#fff;border-top:1px solid #a0a0a0;border-left:1px solid #a0a0a0;border-right:1px solid #fff;border-bottom:1px solid #fff;box-sizing:content-box;width:48px;height:19px;"></div>
<span style="left:705.74px;top:381.19px;font-size:11px;font-weight:normal;color:#000;transform:scaleX(0.9538);transform-origin:0 0;line-height:16px;">Férias</span>
<div style="left:808px;top:378px;width:49px;height:20px;background:#fff;border-top:1px solid #a0a0a0;border-left:1px solid #a0a0a0;border-right:1px solid #fff;border-bottom:1px solid #fff;box-sizing:content-box;width:48px;height:19px;"></div>
<span style="left:705.88px;top:405.19px;font-size:11px;font-weight:normal;color:#000;transform:scaleX(0.9784);transform-origin:0 0;line-height:16px;">Quitação</span>
<div style="left:808px;top:402px;width:49px;height:20px;background:#fff;border-top:1px solid #a0a0a0;border-left:1px solid #a0a0a0;border-right:1px solid #fff;border-bottom:1px solid #fff;box-sizing:content-box;width:48px;height:19px;"></div>
<div style="left:872px;top:322px;width:1px;height:113px;background:#f9f9f9;"></div>
<div style="left:1023px;top:322px;width:1px;height:113px;background:#f9f9f9;"></div>
<div style="left:872px;top:434px;width:152px;height:1px;background:#f9f9f9;"></div>
<div style="left:872px;top:322px;width:5.7000000000000455px;height:1px;background:#f9f9f9;"></div>
<div style="left:977.3px;top:322px;width:46.700000000000045px;height:1px;background:#f9f9f9;"></div>
<div style="left:871px;top:321px;width:1px;height:115px;background:#a0a0a0;"></div>
<div style="left:1024px;top:321px;width:1px;height:115px;background:#a0a0a0;"></div>
<div style="left:871px;top:435px;width:154px;height:1px;background:#a0a0a0;"></div>
<div style="left:871px;top:321px;width:6.7000000000000455px;height:1px;background:#a0a0a0;"></div>
<div style="left:977.3px;top:321px;width:10.700000000000045px;height:1px;background:#a0a0a0;"></div>
<div style="left:1004px;top:321px;width:21px;height:1px;background:#a0a0a0;"></div>
<span style="left:879.16px;top:314.19px;font-size:11px;font-weight:normal;color:#000;transform:scaleX(0.9539);transform-origin:0 0;line-height:16px;">Cálculo Proporcional</span>
<svg style="left:988px;top:315px" width="16" height="16" viewBox="0 0 16 16">
<defs><linearGradient id="ig988_315" x1="0" y1="0" x2="1" y2="1"><stop offset="0" stop-color="#1a3aaa"/><stop offset="0.55" stop-color="#2c58cc"/><stop offset="1" stop-color="#5c8cee"/></linearGradient></defs>
<circle cx="8" cy="8" r="7.3" fill="#e4e4e4" stroke="#888888" stroke-width="1.2"/>
<circle cx="8" cy="8" r="6.2" fill="url(#ig988_315)"/>
<rect x="7" y="3.2" width="2.2" height="2.2" rx="1" fill="#fff"/>
<rect x="7" y="6.4" width="2.2" height="6" fill="#fff"/>
</svg>
<div style="left:880px;top:336px;width:11px;height:11px;background:#fff;border:1px solid #8e8f8f;box-sizing:content-box;"></div>
<span style="left:895.07px;top:335.19px;font-size:11px;font-weight:normal;color:#000;transform:scaleX(0.9495);transform-origin:0 0;line-height:16px;">Admissão</span>
<div style="left:880px;top:354px;width:11px;height:11px;background:#fff;border:1px solid #8e8f8f;box-sizing:content-box;"></div>
<span style="left:895.07px;top:353.19px;font-size:11px;font-weight:normal;color:#000;transform:scaleX(1.0188);transform-origin:0 0;line-height:16px;">Afastamento</span>
<div style="left:880px;top:372px;width:11px;height:11px;background:#fff;border:1px solid #8e8f8f;box-sizing:content-box;"></div>
<span style="left:894.90px;top:371.19px;font-size:11px;font-weight:normal;color:#000;transform:scaleX(0.9983);transform-origin:0 0;line-height:16px;">Férias</span>
<div style="left:880px;top:390px;width:11px;height:11px;background:#fff;border:1px solid #8e8f8f;box-sizing:content-box;"></div>
<span style="left:894.97px;top:389.19px;font-size:11px;font-weight:normal;color:#000;transform:scaleX(0.9993);transform-origin:0 0;line-height:16px;">Quitação</span>
<div style="left:880px;top:408px;width:11px;height:11px;background:#f0f0f0;border:1px solid #bcbcbc;box-sizing:content-box;"></div>
<span style="left:894.89px;top:407.19px;font-size:11px;font-weight:normal;color:#6d6d6d;transform:scaleX(1.0062);transform-origin:0 0;line-height:16px;">Férias/Ev. Aula</span>
<div style="left:259px;top:461px;width:766px;height:107px;background:#f0f0f0;"></div>
<div style="left:259px;top:461px;width:764px;height:1px;background:#fff;"></div>
<div style="left:259px;top:461px;width:1px;height:106px;background:#fff;"></div>
<div style="left:1023px;top:461px;width:1px;height:106px;background:#a0a0a0;"></div>
<div style="left:1024px;top:461px;width:1px;height:107px;background:#696969;"></div>
<div style="left:260px;top:566px;width:764px;height:1px;background:#a0a0a0;"></div>
<div style="left:259px;top:567px;width:766px;height:1px;background:#696969;"></div>
<div style="left:259px;top:442px;width:107px;height:20px;background:#f0f0f0;"></div>
<div style="left:259px;top:444px;width:1px;height:18px;background:#fff;"></div>
<div style="left:260px;top:443px;width:1px;height:1px;background:#fff;"></div>
<div style="left:261px;top:442px;width:102px;height:1px;background:#fff;"></div>
<div style="left:363px;top:443px;width:1px;height:1px;background:#a0a0a0;"></div>
<div style="left:364px;top:443px;width:1px;height:18px;background:#a0a0a0;"></div>
<div style="left:365px;top:444px;width:1px;height:17px;background:#696969;"></div>
<span style="left:264.76px;top:444.19px;font-size:11px;font-weight:normal;color:#000;transform:scaleX(0.9626);transform-origin:0 0;line-height:16px;">Tabela de Rubricas</span>
<div style="left:367px;top:444px;width:39px;height:1px;background:#fff;"></div>
<div style="left:366px;top:445px;width:1px;height:16px;background:#fff;"></div>
<div style="left:406px;top:445px;width:1px;height:1px;background:#a0a0a0;"></div>
<div style="left:407px;top:445px;width:1px;height:16px;background:#a0a0a0;"></div>
<div style="left:408px;top:446px;width:1px;height:15px;background:#696969;"></div>
<span style="left:369.06px;top:445.19px;font-size:11px;font-weight:normal;color:#000;transform:scaleX(0.9319);transform-origin:0 0;line-height:16px;">eSocial</span>
<span style="left:269.05px;top:481.19px;font-size:11px;font-weight:normal;color:#000;transform:scaleX(0.9560);transform-origin:0 0;line-height:16px;">eSocial:</span>
<div style="left:339px;top:478px;width:39px;height:20px;background:#fff;border-top:1px solid #a0a0a0;border-left:1px solid #a0a0a0;border-right:1px solid #fff;border-bottom:1px solid #fff;box-sizing:content-box;width:38px;height:19px;"></div>
<div style="left:383px;top:478px;width:20px;height:19px;background:#f0f0f0;border-top:1px solid #fff;border-left:1px solid #fff;border-right:1px solid #a0a0a0;border-bottom:1px solid #a0a0a0;box-sizing:content-box;"></div>
<svg style="left:389.5px;top:486px" width="10" height="6" viewBox="0 0 10 6"><path d="M0.3 0H9.7L5 5.5Z" fill="#000"/></svg>
<div style="left:408px;top:478px;width:20px;height:19px;background:#f0f0f0;border-top:1px solid #fff;border-left:1px solid #fff;border-right:1px solid #a0a0a0;border-bottom:1px solid #a0a0a0;box-sizing:content-box;"></div>
<svg style="left:411px;top:480px" width="16" height="16" viewBox="0 0 16 16">
<defs><linearGradient id="ig411_480" x1="0" y1="0" x2="1" y2="1"><stop offset="0" stop-color="#1a3aaa"/><stop offset="0.55" stop-color="#2c58cc"/><stop offset="1" stop-color="#5c8cee"/></linearGradient></defs>
<circle cx="8" cy="8" r="7.3" fill="#e4e4e4" stroke="#888888" stroke-width="1.2"/>
<circle cx="8" cy="8" r="6.2" fill="url(#ig411_480)"/>
<rect x="7" y="3.2" width="2.2" height="2.2" rx="1" fill="#fff"/>
<rect x="7" y="6.4" width="2.2" height="6" fill="#fff"/>
</svg>
<div style="left:434px;top:478px;width:208px;height:20px;background:#f0f0f0;border-top:1px solid #a0a0a0;border-left:1px solid #a0a0a0;border-right:1px solid #fff;border-bottom:1px solid #fff;box-sizing:content-box;width:207px;height:19px;"></div>
<span style="left:268.96px;top:514.19px;font-size:11px;font-weight:normal;color:#000;transform:scaleX(0.9568);transform-origin:0 0;line-height:16px;">Campo TRCT:</span>
<div style="left:339px;top:511px;width:39px;height:20px;background:#fff;border-top:1px solid #a0a0a0;border-left:1px solid #a0a0a0;border-right:1px solid #fff;border-bottom:1px solid #fff;box-sizing:content-box;width:38px;height:19px;"></div>
<div style="left:383px;top:511px;width:20px;height:19px;background:#f0f0f0;border-top:1px solid #fff;border-left:1px solid #fff;border-right:1px solid #a0a0a0;border-bottom:1px solid #a0a0a0;box-sizing:content-box;"></div>
<svg style="left:389.5px;top:519px" width="10" height="6" viewBox="0 0 10 6"><path d="M0.3 0H9.7L5 5.5Z" fill="#808080"/></svg>
<div style="left:408px;top:511px;width:234px;height:20px;background:#f0f0f0;border-top:1px solid #a0a0a0;border-left:1px solid #a0a0a0;border-right:1px solid #fff;border-bottom:1px solid #fff;box-sizing:content-box;width:233px;height:19px;"></div>
<span style="left:652.60px;top:481.19px;font-size:11px;font-weight:normal;color:#000;transform:scaleX(0.9955);transform-origin:0 0;line-height:16px;">HomologNet:</span>
<div style="left:729px;top:478px;width:32px;height:20px;background:#fff;border-top:1px solid #a0a0a0;border-left:1px solid #a0a0a0;border-right:1px solid #fff;border-bottom:1px solid #fff;box-sizing:content-box;width:31px;height:19px;"></div>
<div style="left:766px;top:478px;width:20px;height:19px;background:#f0f0f0;border-top:1px solid #fff;border-left:1px solid #fff;border-right:1px solid #a0a0a0;border-bottom:1px solid #a0a0a0;box-sizing:content-box;"></div>
<svg style="left:772.5px;top:486px" width="10" height="6" viewBox="0 0 10 6"><path d="M0.3 0H9.7L5 5.5Z" fill="#000"/></svg>
<div style="left:792px;top:478px;width:219px;height:20px;background:#f0f0f0;border-top:1px solid #a0a0a0;border-left:1px solid #a0a0a0;border-right:1px solid #fff;border-bottom:1px solid #fff;box-sizing:content-box;width:218px;height:19px;"></div>
<span style="left:652.50px;top:514.19px;font-size:11px;font-weight:normal;color:#000;transform:scaleX(0.9960);transform-origin:0 0;line-height:16px;">Início vigência:</span>
<div style="left:729px;top:511px;width:81px;height:20px;background:#fff;border-top:1px solid #a0a0a0;border-left:1px solid #a0a0a0;border-right:1px solid #fff;border-bottom:1px solid #fff;box-sizing:content-box;width:80px;height:19px;"></div>
<div style="left:256px;top:573px;width:769px;height:94px;background:#ffffe1;"></div>
<svg style="left:259px;top:582px" width="16" height="16" viewBox="0 0 16 16">
<defs><linearGradient id="ig259_582" x1="0" y1="0" x2="1" y2="1"><stop offset="0" stop-color="#1a3aaa"/><stop offset="0.55" stop-color="#2c58cc"/><stop offset="1" stop-color="#5c8cee"/></linearGradient></defs>
<circle cx="8" cy="8" r="7.3" fill="#e4e4e4" stroke="#888888" stroke-width="1.2"/>
<circle cx="8" cy="8" r="6.2" fill="url(#ig259_582)"/>
<rect x="7" y="3.2" width="2.2" height="2.2" rx="1" fill="#fff"/>
<rect x="7" y="6.4" width="2.2" height="6" fill="#fff"/>
</svg>
</body></html>
